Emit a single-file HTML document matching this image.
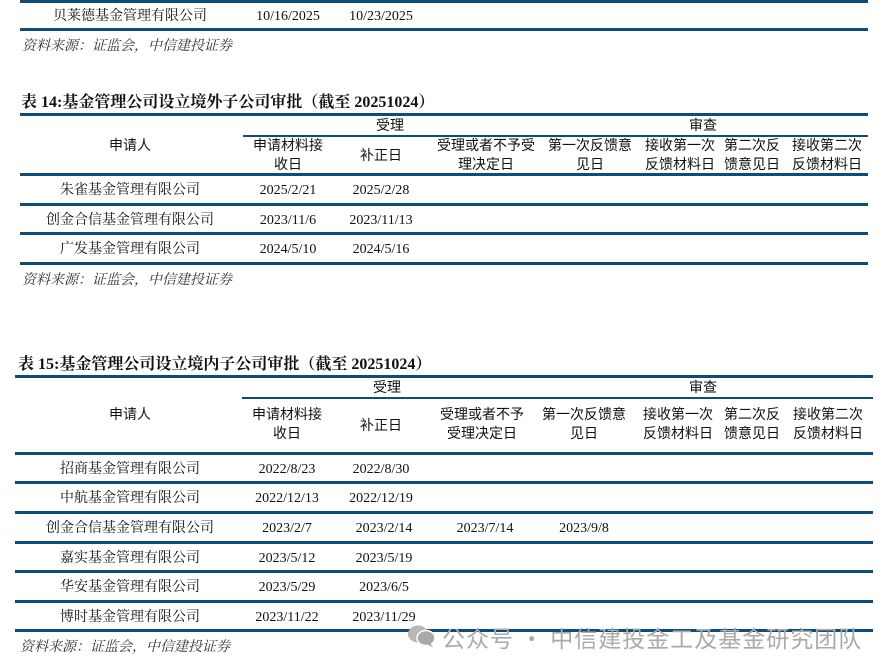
<!DOCTYPE html>
<html><head><meta charset="utf-8"><style>
body{margin:0;width:894px;height:670px;background:#fff;position:relative;overflow:hidden;font-family:"Liberation Serif","Noto Serif CJK SC","Noto Sans CJK SC",serif;color:#111}
.l{position:absolute;background:#0e4c7a;height:3px}
.s{position:absolute;background:#0e4c7a;height:2px}
.t{position:absolute;font-size:14px;white-space:nowrap;transform:translateX(-50%);line-height:18px;margin-top:2px}
.h{position:absolute;font-size:14px;white-space:nowrap;transform:translateX(-50%);line-height:19px;text-align:center;font-family:"Liberation Sans","Noto Sans CJK SC",sans-serif}
.src{position:absolute;font-size:14px;font-style:italic;color:#333;font-family:"Liberation Serif","Noto Serif CJK SC",serif}
.ti{position:absolute;font-size:16px;font-weight:bold;font-family:"Liberation Serif","Noto Serif CJK SC",serif;white-space:nowrap}
</style></head><body>
<div class="l" style="left:20px;width:848px;top:0"></div>
<div class="t" style="left:130px;top:6px">贝莱德基金管理有限公司</div>
<div class="t" style="left:288px;top:6px">10/16/2025</div>
<div class="t" style="left:381px;top:6px">10/23/2025</div>
<div class="l" style="left:20px;width:848px;top:28px"></div>
<div class="src" style="left:22px;top:35px">资料来源：证监会，中信建投证券</div>

<div class="ti" style="left:21px;top:89px">表 14:基金管理公司设立境外子公司审批（截至 20251024）</div>
<div class="l" style="left:20px;width:848px;top:113px"></div>
<div class="h" style="left:390px;top:116px">受理</div>
<div class="h" style="left:703px;top:116px">审查</div>
<div class="s" style="left:243px;width:625px;top:135px"></div>
<div class="h" style="left:130px;top:136px">申请人</div>
<div class="h" style="left:288px;top:136px">申请材料接<br>收日</div>
<div class="h" style="left:381px;top:146px">补正日</div>
<div class="h" style="left:486px;top:136px">受理或者不予受<br>理决定日</div>
<div class="h" style="left:590px;top:136px">第一次反馈意<br>见日</div>
<div class="h" style="left:680px;top:136px">接收第一次<br>反馈材料日</div>
<div class="h" style="left:752px;top:136px">第二次反<br>馈意见日</div>
<div class="h" style="left:827px;top:136px">接收第二次<br>反馈材料日</div>
<div class="l" style="left:20px;width:848px;top:173px"></div>
<div class="t" style="left:130px;top:180px">朱雀基金管理有限公司</div><div class="t" style="left:288px;top:180px">2025/2/21</div><div class="t" style="left:381px;top:180px">2025/2/28</div>
<div class="l" style="left:20px;width:848px;top:203px"></div>
<div class="t" style="left:130px;top:210px">创金合信基金管理有限公司</div><div class="t" style="left:288px;top:210px">2023/11/6</div><div class="t" style="left:381px;top:210px">2023/11/13</div>
<div class="l" style="left:20px;width:848px;top:232px"></div>
<div class="t" style="left:130px;top:239px">广发基金管理有限公司</div><div class="t" style="left:288px;top:239px">2024/5/10</div><div class="t" style="left:381px;top:239px">2024/5/16</div>
<div class="l" style="left:20px;width:848px;top:262px"></div>
<div class="src" style="left:22px;top:269px">资料来源：证监会，中信建投证券</div>

<div class="ti" style="left:18px;top:351px">表 15:基金管理公司设立境内子公司审批（截至 20251024）</div>
<div class="l" style="left:15px;width:858px;top:375px"></div>
<div class="h" style="left:387px;top:378px">受理</div>
<div class="h" style="left:703px;top:378px">审查</div>
<div class="s" style="left:242px;width:631px;top:397px"></div>
<div class="h" style="left:130px;top:405px">申请人</div>
<div class="h" style="left:287px;top:405px">申请材料接<br>收日</div>
<div class="h" style="left:381px;top:416px">补正日</div>
<div class="h" style="left:482px;top:405px">受理或者不予<br>受理决定日</div>
<div class="h" style="left:584px;top:405px">第一次反馈意<br>见日</div>
<div class="h" style="left:678px;top:405px">接收第一次<br>反馈材料日</div>
<div class="h" style="left:752px;top:405px">第二次反<br>馈意见日</div>
<div class="h" style="left:828px;top:405px">接收第二次<br>反馈材料日</div>
<div class="l" style="left:15px;width:858px;top:452px"></div>
<div class="t" style="left:130px;top:459px">招商基金管理有限公司</div><div class="t" style="left:287px;top:459px">2022/8/23</div><div class="t" style="left:381px;top:459px">2022/8/30</div>
<div class="l" style="left:15px;width:858px;top:481px"></div>
<div class="t" style="left:130px;top:488px">中航基金管理有限公司</div><div class="t" style="left:287px;top:488px">2022/12/13</div><div class="t" style="left:381px;top:488px">2022/12/19</div>
<div class="l" style="left:15px;width:858px;top:511px"></div>
<div class="t" style="left:130px;top:518px">创金合信基金管理有限公司</div><div class="t" style="left:287px;top:518px">2023/2/7</div><div class="t" style="left:384px;top:518px">2023/2/14</div><div class="t" style="left:485px;top:518px">2023/7/14</div><div class="t" style="left:584px;top:518px">2023/9/8</div>
<div class="l" style="left:15px;width:858px;top:541px"></div>
<div class="t" style="left:130px;top:548px">嘉实基金管理有限公司</div><div class="t" style="left:287px;top:548px">2023/5/12</div><div class="t" style="left:384px;top:548px">2023/5/19</div>
<div class="l" style="left:15px;width:858px;top:570px"></div>
<div class="t" style="left:130px;top:577px">华安基金管理有限公司</div><div class="t" style="left:287px;top:577px">2023/5/29</div><div class="t" style="left:384px;top:577px">2023/6/5</div>
<div class="l" style="left:15px;width:858px;top:600px"></div>
<div class="t" style="left:130px;top:607px">博时基金管理有限公司</div><div class="t" style="left:287px;top:607px">2023/11/22</div><div class="t" style="left:384px;top:607px">2023/11/29</div>
<div class="l" style="left:15px;width:858px;top:629px"></div>
<div class="src" style="left:20px;top:636px">资料来源：证监会，中信建投证券</div>
<svg style="position:absolute;left:406px;top:623px" width="32" height="26" viewBox="0 0 32 26"><ellipse cx="12" cy="11" rx="10" ry="8.5" fill="#b8b8b8"/><ellipse cx="20" cy="15" rx="9" ry="7.5" fill="#a9a9a9" stroke="#fff" stroke-width="1.5"/><path d="M24 20 L27 24 L22 22Z" fill="#a9a9a9"/></svg>
<div style="position:absolute;left:442px;top:620px;font-size:23px;color:#aaa;font-family:'Noto Sans CJK SC',sans-serif;letter-spacing:1px;white-space:nowrap">公众号 · 中信建投金工及基金研究团队</div>
</body></html>
